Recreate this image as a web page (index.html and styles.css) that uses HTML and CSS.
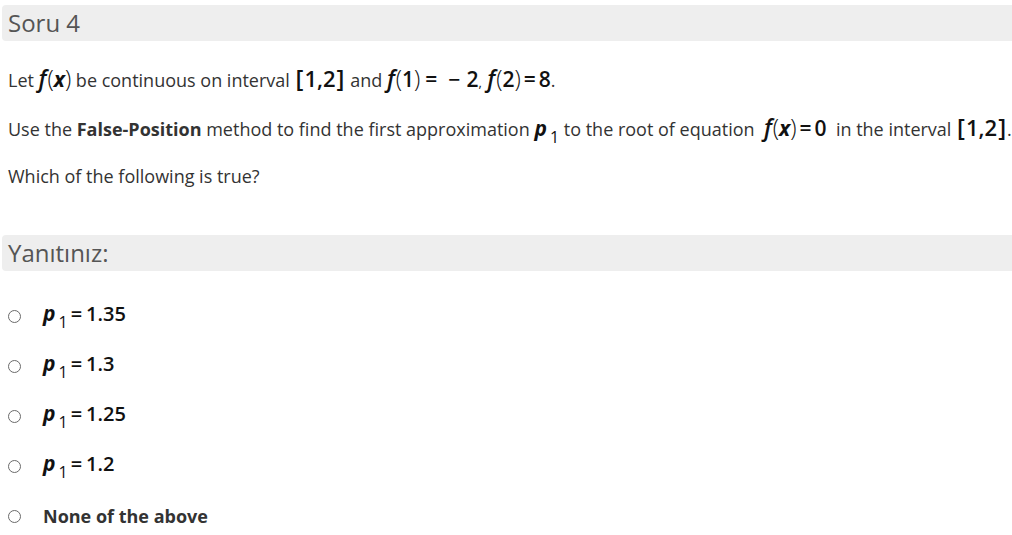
FILE: index.html
```html
<!DOCTYPE html>
<html>
<head>
<meta charset="utf-8">
<link rel="stylesheet" href="styles.css">
</head>
<body>
<div class="page">
  <div class="bar">Soru 4</div>
  <div class="question">
    <p class="line">Let <span class="m"><i class="fv">f</i><span class="pr">(</span><i class="xv">x</i><span class="pr">)</span></span> be continuous on interval <span class="m br"><span class="bk">[</span>1,2<span class="bk">]</span></span> and <span class="m"><i class="fv">f</i><span class="pr">(</span><span class="num">1</span><span class="pr">)</span><span class="op">=</span><span class="op">&minus;</span><span class="num">2</span><span class="cm">,</span> <i class="fv">f</i><span class="pr">(</span><span class="num">2</span><span class="pr">)</span><span class="op eq">=</span><span class="num">8</span></span>.</p>
    <p class="line">Use the <b>False-Position</b> method to find the first approximation <span class="m"><i class="pv">p</i><sub class="sub">1</sub></span> to the root of equation &nbsp;<span class="m"><i class="fv">f</i><span class="pr">(</span><i class="xv">x</i><span class="pr">)</span><span class="op eq">=</span><span class="num">0</span></span> &nbsp;in the interval <span class="m br"><span class="bk">[</span>1,2<span class="bk">]</span></span>.</p>
    <p class="line">Which of the following is true?</p>
  </div>
  <div class="bar answer">Yanıtınız:</div>
  <ul class="options">
    <li class="opt"><span class="radio"></span><span class="otext"><i class="pv">p</i><sub class="sub">1</sub><span class="oeq">=</span>1.35</span></li>
    <li class="opt"><span class="radio"></span><span class="otext"><i class="pv">p</i><sub class="sub">1</sub><span class="oeq">=</span>1.3</span></li>
    <li class="opt"><span class="radio"></span><span class="otext"><i class="pv">p</i><sub class="sub">1</sub><span class="oeq">=</span>1.25</span></li>
    <li class="opt"><span class="radio"></span><span class="otext"><i class="pv">p</i><sub class="sub">1</sub><span class="oeq">=</span>1.2</span></li>
    <li class="opt"><span class="radio"></span><span class="otext none">None of the above</span></li>
  </ul>
</div>
</body>
</html>
```

FILE: styles.css
```css
html, body {
  margin: 0;
  padding: 0;
  background: #fff;
}
body {
  font-family: "Open Sans", sans-serif;
  color: #333;
}
.page {
  padding: 5px 0 0 2px;
}
.bar {
  background: #eee;
  border-radius: 4px 0 0 4px;
  height: 36px;
  line-height: 36px;
  padding-left: 6px;
  font-size: 24px;
  color: #555;
}
.question {
  padding: 20px 0 0 6px;
}
.line {
  margin: 0 0 15px 0;
  font-size: 18px;
  line-height: 34px;
  height: 34px;
  white-space: nowrap;
}
.m {
  color: #111;
  font-size: 21px;
}
.fv {
  font-family: "Open Sans", sans-serif;
  font-style: italic;
  font-weight: 600;
  font-size: 23px;
  margin-right: 1px;
}
.xv, .pv {
  font-family: "Open Sans", sans-serif;
  font-style: italic;
  font-weight: bold;
}
.pr {
  font-weight: 300;
  font-size: 23px;
}
.num {
  font-weight: 600;
}
.op {
  font-weight: 600;
  margin: 0 6px 0 5px;
}
.eq {
  margin: 0 3px 0 3px;
}
.cm {
  font-size: 13px;
}
.br {
  font-weight: 600;
  font-size: 22px;
}
.bk {
  font-size: 24px;
  font-weight: 600;
  margin: 0 1px;
}
.sub {
  font-size: 16px;
  font-weight: 400;
  vertical-align: -7px;
  margin-left: 3px;
}
.answer {
  margin-top: 42px;
}
.options {
  list-style: none;
  margin: 0;
  padding: 31px 0 0 0;
}
.opt {
  display: flex;
  align-items: center;
  height: 28px;
  margin-bottom: 22px;
}
.radio {
  width: 13px;
  height: 13px;
  border: 1px solid #6a6a6a;
  border-radius: 50%;
  margin-left: 6px;
  margin-right: 22px;
  box-sizing: border-box;
  background: #fff;
}
.otext {
  font-size: 20px;
  font-weight: 600;
  color: #111;
  white-space: nowrap;
}
.otext .pv {
  font-size: 21px;
}
.oeq {
  margin: 0 4px 0 3px;
}
.none {
  font-size: 18px;
  font-weight: 700;
  color: #333;
}
```
